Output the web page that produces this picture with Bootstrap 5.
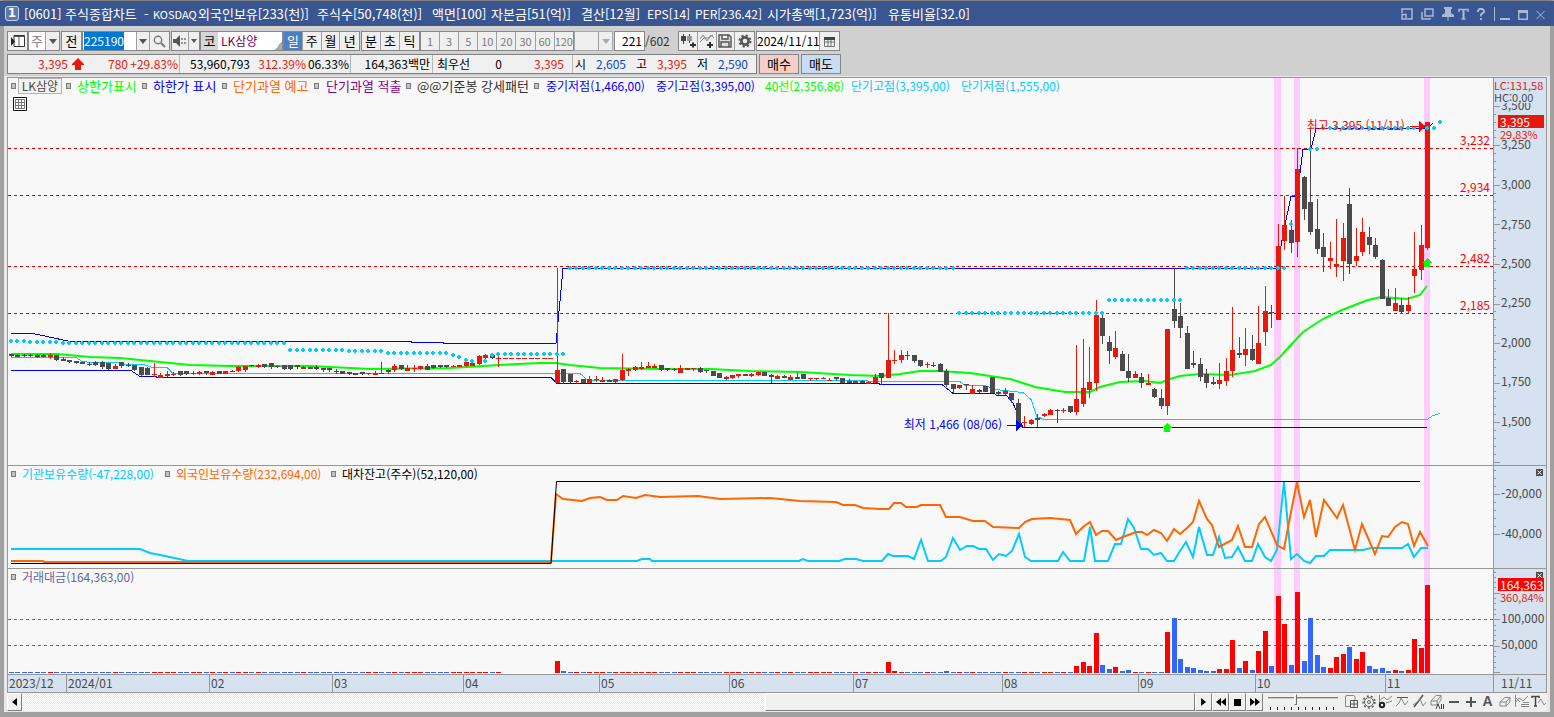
<!DOCTYPE html>
<html lang="ko">
<head>
<meta charset="utf-8">
<meta name="viewport" content="width=device-width, initial-scale=1">
<title>[0601] 주식종합차트</title>
<link href="https://cdn.jsdelivr.net/npm/bootstrap@5.3.0/dist/css/bootstrap.min.css" rel="stylesheet">
<style>
:root{--line:#969696;--axis:#d6e2f0;--plot:#f8f8f8;--up:#e8190a;--down:#4b4b4b;--cy:#00ccff}
body{font-family:"Noto Sans CJK KR",sans-serif;font-size:13px;line-height:16px;color:#000;background:#a0a0a0;overflow:hidden}
button,input,select{font:inherit;color:inherit}
.window{border:solid #a0a0a0;border-width:0 4px 5px;border-top:1px solid #808080;background:#e8e8e8;min-width:1200px}
.titlebar{background:#3a5691;color:#fff;height:25px;margin:0 -4px;padding:0 9px 0 5px}
.titlebar .idx{width:14px;height:15px;border:1px solid #c9d3e8;border-radius:3px;background:#5f78ab;font:bold 12px/13px "DejaVu Sans",sans-serif;text-align:center}
.caption{display:grid;align-items:center;grid-template-columns:41px 79px 9px 45px 119px 115px 59px 90px 66px 48px 72px 121px auto;margin-left:5px;white-space:nowrap}
.lat{font-size:11px}
.num{font-size:12px}
.winbtns svg{display:block;fill:none;stroke:#a9b8d8;stroke-width:1.5}
.winbtns button,.bare{background:none;border:0;padding:0}
.tools{background:#d0d0d0;height:51px;padding:5px 3px 0;border-bottom:1px solid #e8e8e8}
.tools>div{height:20px}
.tools>div+div{margin-top:3px}
.box{border:1px solid #868686;background:#efefef;height:20px;white-space:nowrap}
.box>*{border:0;border-right:1px solid #a0a0a0;background:none;padding:0;height:18px;line-height:18px;text-align:center}
.box>*:last-child{border-right:0}
.box svg,.tray svg{display:block;margin:auto}
.w19{width:19px}.w13{width:13px}.gap-l{margin-left:1px}
.btn-on{background:#4a80c4!important;color:#fff}
.dim{color:#7c7c7c}
.box>input{background:#fff;border-radius:0;outline:0}
.box>input::selection{background:#0078d7;color:#fff}
.pick{background:#fff!important;color:#777;width:17px}
#code{width:54px;padding-left:1px}
.sp{width:17px}.w9{width:10px}
.stock{width:83px;background:#fff linear-gradient(135deg,transparent 50%,#aaa 50%) right bottom/8px 8px no-repeat}
.stock .kq{background:#d6d6d6;width:17px;border:0}
.stock .nm{color:#705;padding-left:3px}
.b4>*,.b4i>*{width:19px}.b4,.b4i{width:77px}
.b3{width:59px}.b3>*{width:19px}
.b8{width:154px;font-size:11px}.b8>*{width:19px;flex:1 0 0}
.emp{width:39px;border-color:#a8a8a8}.emp>span{width:24px}
.cnt{width:31px}.cnt>input{width:29px;padding-right:2px}
.tot{width:33px;line-height:20px;color:#333}
.dt{width:84px}.dt>input{width:64px}
.red{color:#e0220f}.blu{color:#1048c0}
.quote{border:1px solid #808080;background:#f0f0f0;height:20px;width:750px}
.quote>div{display:grid;align-items:center;border-right:1px solid #b8b8b8;height:18px;white-space:nowrap;text-align:right}
.quote>div:last-child{border:0}
.q1{grid-template-columns:60px 16px 44px 50px;width:172px}
.q2{grid-template-columns:70px 56px 43px;width:171px}
.q3{width:82px;padding-right:2px}
.q4{grid-template-columns:37px 32px 62px;width:140px}
.q5{grid-template-columns:12px 40px 21px 40px 21px 40px;width:183px;padding-left:1px}
.order{border:1px solid #868686;width:40px;height:20px;padding:0;line-height:18px}
.buy{background:#f4cfca;margin:0 2px}.sell{background:#c8ddf4}
.chart{border:1px solid var(--line);margin:0 3px;background:var(--plot)}
.pane{min-height:0;border-bottom:1px solid var(--line)}
.p-price{flex:387 1 0}.p-hold{flex:102 1 0}.p-vol{flex:105 1 0}
.plot{min-width:0}
.plot>svg,.scale>svg{display:block;width:100%;height:100%}
.scale{width:53px;background:var(--axis);border-left:1px solid var(--line);color:#4b4b4b;font-size:12px}
.scale .tick{position:absolute;left:7px;transform:translateY(-50%)}
.legend i{width:5px;height:6px;border:1px solid #7c7c7c;background:#c4c4c4;align-self:center;justify-self:start}
.legend{position:absolute;top:0;left:3px;white-space:nowrap;display:grid;align-items:center}
.lg-price{grid-template-columns:7px 48px 11px 65px 11px 69px 11px 81px 12px 80px 11px 117px 12px 110px 109px 86px 110px auto}
.lg-hold{grid-template-columns:11px 143px 11px 155px 11px auto;font-size:12px}
.lg-vol{grid-template-columns:11px auto;font-size:12px}
.boxed{border:1px solid #b4b4b4;background:#f2f2f2;text-align:center;line-height:14px;width:44px;color:#4b4b4b;font-size:12px}
.tbl{position:absolute;top:19px;left:5px;width:14px;height:14px}
.lvl{position:absolute;right:3px;color:#f00;font-size:12px;transform:translateY(-100%)}
.mark-tx{position:absolute;white-space:nowrap;font-size:12px;transform:translate(-100%,-50%)}
.tag{position:absolute;left:4px;right:2px;background:var(--up);color:#fff;height:13px;line-height:13px;padding-left:2px}
.tag-sub{position:absolute;left:6px;color:var(--up);line-height:12px;font-size:11px}
.lchc{position:absolute;top:0;left:0;right:0;line-height:12px;font-size:11px;white-space:nowrap;background:var(--axis);height:25px;padding-top:1px}
.cls{position:absolute;right:3px;top:3px;width:7px;height:7px;background:#4b4b4b;color:#fff;border:0;padding:0;display:flex}
.cls svg{margin:auto}
.dates{height:17px;background:var(--axis);color:#4b4b4b;font-size:12px;line-height:16px}
.months{display:grid;grid-template-columns:58fr 143fr 123fr 131fr 136fr 130fr 124fr 149fr 136fr 117fr 130fr 108fr;min-width:0}
.months>span{border-left:1px solid var(--line);padding-left:1px;white-space:nowrap}
.months>span:first-child{border:0}
.today{width:53px;border-left:1px solid var(--line);padding-left:7px}
.tray{height:18px;margin:0 3px 1px;background:#f0f0f0}
.track{background:repeating-conic-gradient(#fff 0 25%,#e9e9e9 0 50%) 0 0/2px 2px}
.raised{border:1px solid;border-color:#fff #808080 #808080 #fff;background:#f0f0f0;padding:0;width:17px;height:18px}
.w15{width:15px}
.thumb{width:430px}
.zoomer{width:70px;background:repeating-linear-gradient(90deg,#222 0 1px,transparent 1px 7px) 2px 14px/66px 3px no-repeat;margin:0 5px}
.zoomer input{appearance:none;display:block;width:70px;height:12px;margin:0;background:linear-gradient(#808080 1px,#c8c8c8 1px) 0 4px/70px 2px no-repeat}
.zoomer input::-webkit-slider-thumb{appearance:none;width:3px;height:11px;background:#e8e8e8;border:1px solid;border-color:#fff #707070 #707070 #fff}
.tray .ic{width:17px;height:17px}
.tray .ltr{color:#555;font:bold 14px/17px "Liberation Sans",sans-serif}
</style>
</head>
<body>
<main class="window vh-100 d-flex flex-column">
<header class="titlebar d-flex align-items-center flex-shrink-0">
  <span class="idx flex-shrink-0">1</span>
  <div class="caption flex-grow-1"><span>[0601]</span><span>주식종합차트</span><span>-</span><span class="lat">KOSDAQ</span><span>외국인보유[233(천)]</span><span>주식수[50,748(천)]</span><span>액면[100]</span><span>자본금[51(억)]</span><span>결산[12월]</span><span class="num">EPS[14]</span><span class="num">PER[236.42]</span><span>시가총액[1,723(억)]</span><span>유통비율[32.0]</span></div>
  <div class="winbtns d-flex align-items-center">
    <button aria-label="작은 창" class="me-2"><svg width="12" height="12" viewBox="0 0 12 12"><path d="M1 5V1H11V11H6M1 6.5H5V11H1Z"/></svg></button>
    <button aria-label="복제" class="me-2"><svg width="13" height="12" viewBox="0 0 13 12"><path d="M4 1H12V8H4ZM1 4V11H9V10"/></svg></button>
    <button aria-label="고정" class="me-1"><svg width="12" height="14" viewBox="0 0 12 14"><path fill="#a9b8d8" stroke="none" d="M2 0H10V2H9V6L12 8V10H6.5V14H5.500V10H0V8L3 6V2H2Z"/></svg></button>
    <button aria-label="글꼴" class="me-2"><svg width="11" height="12" viewBox="0 0 11 12"><path d="M1 4V1.500H10V4M3.500 11H7.500"/><path stroke-width="2.200" d="M5.500 1V11"/></svg></button>
    <button aria-label="도움말" class="me-2"><svg width="8" height="12" viewBox="0 0 8 12"><path stroke-width="1.800" d="M1 4V2.500L2.500 1H5.500L7 2.500V4L4 6.500V8.500M4 10V12"/></svg></button>
    <svg width="3" height="14"><path stroke-width="1" d="M1.500 0V14"/></svg>
    <button aria-label="최소화" class="ms-1 me-2"><svg width="10" height="12" viewBox="0 0 10 12"><path stroke-width="2" d="M0 11H10"/></svg></button>
    <button aria-label="최대화" class="me-2"><svg width="10" height="12" viewBox="0 0 10 12"><path d="M.7 2V11.300H9.300V2"/><path stroke-width="3" d="M0 3.500H10"/></svg></button>
    <button aria-label="닫기"><svg width="9" height="12" viewBox="0 0 9 12"><path stroke-width="1" d="M.5 3L8.500 11M8.500 3L.5 11"/></svg></button>
  </div>
</header>

<section class="tools flex-shrink-0">
  <div class="d-flex">
    <div class="box d-flex"><button class="w19" aria-label="패널"><svg width="18" height="16" viewBox="0 0 18 16"><path d="M5 2.500H15.500V13.500H5Z" fill="#fff" stroke="#333"/><path d="M5 3.500H16M10 3V13" stroke="#555" fill="none"/><path d="M2 4L6 8.500L2 13Z" fill="#222"/></svg></button></div>
    <div class="box d-flex"><span class="pick">주</span><button class="w13" aria-label="종류 열기"><svg width="8" height="5"><path d="M0 0H8L4 5Z" fill="#555"/></svg></button></div>
    <div class="box d-flex gap-l"><button class="w19">전</button></div>
    <div class="box d-flex"><input class="num text-start" id="code" aria-label="종목코드" value="225190" size="1"><button class="w13" aria-label="최근 종목"><svg width="8" height="5"><path d="M0 0H8L4 5Z" fill="#555"/></svg></button><button class="w19" aria-label="검색"><svg width="13" height="13" viewBox="0 0 13 13" fill="none" stroke="#777"><circle cx="5" cy="5" r="3.700" stroke-width="1.400"/><path d="M8 8L12 12" stroke-width="2"/></svg></button></div>
    <div class="box d-flex gap-l"><button class="sp" aria-label="소리"><svg width="14" height="12" viewBox="0 0 14 12"><path d="M0 4H3L7 0V12L3 8H0Z" fill="#555"/><path d="M9 3v2M9 7v2M12 3v2M12 7v2" stroke="#777" stroke-width="1.500"/></svg></button><button class="w9" aria-label="소리 메뉴"><svg width="6" height="4"><path d="M0 0H6L3 4Z" fill="#555"/></svg></button></div>
    <div class="box d-flex stock"><span class="kq">코</span><span class="nm num">LK삼양</span></div>
    <div class="box d-flex b4"><button class="btn-on">일</button><button>주</button><button>월</button><button>년</button></div>
    <div class="box d-flex b3 gap-l"><button>분</button><button>초</button><button>틱</button></div>
    <div class="box d-flex b8 dim"><button>1</button><button>3</button><button>5</button><button>10</button><button>20</button><button>30</button><button>60</button><button>120</button></div>
    <div class="box d-flex emp"><span></span><button class="w13" aria-label="분봉 목록"><svg width="8" height="5"><path d="M0 0H8L4 5Z" fill="#aaa"/></svg></button></div>
    <div class="box d-flex cnt gap-l"><input class="num text-end" aria-label="봉 개수" value="221" size="1"></div>
    <span class="tot num">/602</span>
    <div class="box d-flex b4i">
      <button aria-label="차트 추가"><svg width="16" height="16" viewBox="0 0 16 16"><path d="M3.500 1V11M9.500 1V10" stroke="#444"/><path d="M1 3h5v5H1z" fill="#444"/><path d="M7 3h5v5H7z" fill="#999"/><path d="M10 12h6M13 9.500v5" stroke="#333" stroke-width="2"/></svg></button>
      <button aria-label="지표 추가"><svg width="16" height="16" viewBox="0 0 16 16"><path d="M1 6L4 2L8 8L12 2L15 5M1 9L5 5L9 5L14 2" stroke="#888" fill="none"/><path d="M8 12h6M11 9v6" stroke="#333" stroke-width="2"/></svg></button>
      <button aria-label="저장"><svg width="14" height="14" viewBox="0 0 14 14"><path d="M1 1H11L13 3V13H1ZM4 1V5H10V1M3 13V8H11V13" stroke="#555" stroke-width="1.400" fill="#ddd"/></svg></button>
      <button aria-label="설정"><svg width="14" height="14" viewBox="0 0 14 14"><circle cx="7" cy="7" r="3.600" stroke="#555" stroke-width="2.600" fill="none"/><circle cx="7" cy="7" r="5.500" stroke="#555" stroke-width="2" stroke-dasharray="2.200 2.120" fill="none"/></svg></button>
    </div>
    <div class="box d-flex dt gap-l"><input class="num text-center" aria-label="날짜" value="2024/11/11" size="1"><button class="w19" aria-label="달력"><svg width="11" height="11" viewBox="0 0 11 11"><path d="M.5 1.500h10v9h-10zM.5 6h10M4 4v6M7 4v6" stroke="#777" fill="none"/><path d="M0 1h11v3H0z" fill="#444"/></svg></button></div>
  </div>
  <div class="d-flex">
    <div class="quote d-flex num">
      <div class="q1 red"><span>3,395</span><svg class="ms-1" width="12" height="12" viewBox="0 0 12 12"><path d="M6 0L12 6V7H9V12H3V7H0V6Z" fill="#e8190a"/></svg><span>780</span><span>+29.83%</span></div>
      <div class="q2"><span>53,960,793</span><span class="red">312.39%</span><span>06.33%</span></div>
      <div class="q3">164,363백만</div>
      <div class="q4"><span>최우선</span><span>0</span><span class="red">3,395</span></div>
      <div class="q5"><span>시</span><span class="blu">2,605</span><span>고</span><span class="red">3,395</span><span>저</span><span class="blu">2,590</span></div>
    </div>
    <button class="order buy">매수</button><button class="order sell">매도</button>
  </div>
</section>

<section class="chart d-flex flex-column flex-grow-1">
  <div class="pane p-price d-flex">
    <div class="plot flex-grow-1 position-relative" id="price">
      <svg viewBox="8 78 1485 387" preserveAspectRatio="none" shape-rendering="crispEdges" role="img" aria-label="일봉 차트"></svg>
      <div class="legend lg-price"><i></i><span class="boxed">LK삼양</span><i></i><span style="color:#0f0">상한가표시</span><i></i><span style="color:#00f">하한가 표시</span><i></i><span style="color:#f60">단기과열 예고</span><i></i><span style="color:#808">단기과열 적출</span><i></i><span style="color:#333">@@기준봉 강세패턴</span><i></i><span class="num" style="color:#00f">중기저점(1,466,00)</span><span class="num" style="color:#00f">중기고점(3,395,00)</span><span class="num" style="color:#0f0">40선(2,356,86)</span><span class="num" style="color:#0cf">단기고점(3,395,00)</span><span class="num" style="color:#0cf">단기저점(1,555,00)</span></div>
      <button class="tbl bare" aria-label="표 보기"><svg class="d-block" width="14" height="14" viewBox="0 0 14 14"><path d="M.5 .5h13v13h-13z" fill="#fff" stroke="#111"/><path d="M2.500 2.500h9v9h-9zM2.500 5.500h9M2.500 8.500h9M5.500 2.500v9M8.500 2.500v9" fill="none" stroke="#777"/></svg></button>
    </div>
    <div class="scale position-relative" id="priceScale"><svg viewBox="1494 78 52 387" preserveAspectRatio="none" shape-rendering="crispEdges"></svg></div>
  </div>
  <div class="pane p-hold d-flex">
    <div class="plot flex-grow-1 position-relative" id="hold">
      <svg viewBox="8 466 1485 102" preserveAspectRatio="none" role="img" aria-label="보유수량"></svg>
      <div class="legend lg-hold"><i></i><span style="color:#0cf">기관보유수량(-47,228,00)</span><i></i><span style="color:#f60">외국인보유수량(232,694,00)</span><i></i><span>대차잔고(주수)(52,120,00)</span></div>
    </div>
    <div class="scale position-relative" id="holdScale"><svg viewBox="1494 466 52 102" preserveAspectRatio="none" shape-rendering="crispEdges"></svg><button class="cls" aria-label="닫기"><svg width="5" height="5"><path d="M.5 .5L4.500 4.500M4.500 .5L.5 4.500" stroke="#fff"/></svg></button></div>
  </div>
  <div class="pane p-vol d-flex">
    <div class="plot flex-grow-1 position-relative" id="vol">
      <svg viewBox="8 569 1485 105" preserveAspectRatio="none" shape-rendering="crispEdges" role="img" aria-label="거래대금"></svg>
      <div class="legend lg-vol"><i></i><span style="color:#669">거래대금(164,363,00)</span></div>
    </div>
    <div class="scale position-relative" id="volScale"><svg viewBox="1494 569 52 105" preserveAspectRatio="none" shape-rendering="crispEdges"></svg><button class="cls" aria-label="닫기"><svg width="5" height="5"><path d="M.5 .5L4.500 4.500M4.500 .5L.5 4.500" stroke="#fff"/></svg></button></div>
  </div>
  <div class="dates d-flex flex-shrink-0">
    <div class="months flex-grow-1"><span>2023/12</span><span>2024/01</span><span>02</span><span>03</span><span>04</span><span>05</span><span>06</span><span>07</span><span>08</span><span>09</span><span>10</span><span>11</span></div>
    <div class="today">11/11</div>
  </div>
</section>

<footer class="tray d-flex flex-shrink-0">
  <button class="raised w15" aria-label="왼쪽으로"><svg width="5" height="8"><path d="M5 0V8L0 4Z"/></svg></button>
  <div class="track flex-grow-1 d-flex justify-content-end"><div class="raised thumb"></div></div>
  <button class="raised" aria-label="오른쪽으로"><svg width="5" height="8"><path d="M0 0V8L5 4Z"/></svg></button>
  <button class="raised" aria-label="뒤로"><svg width="10" height="8"><path d="M5 0V8L0 4ZM10 0V8L5 4Z"/></svg></button>
  <button class="raised" aria-label="정지"><svg width="7" height="7"><path d="M0 0H7V7H0Z"/></svg></button>
  <button class="raised" aria-label="앞으로"><svg width="10" height="8"><path d="M0 0V8L5 4ZM5 0V8L10 4Z"/></svg></button>
  <div class="zoomer"><input type="range" aria-label="확대" min="0" max="100" value="39"></div>
  <div class="icons d-flex">
    <button class="bare ic" aria-label="창 추가"><svg width="15" height="15" viewBox="0 0 15 15" fill="none" stroke="#888"><path d="M11 6V3Q11 1.500 9.500 1.500H3Q1.500 1.500 1.500 3V12.500H7"/><path d="M6.500 6.500h7v7h-7zM10 6.500v7M6.500 10h7" stroke="#555"/></svg></button>
    <button class="bare ic" aria-label="설정"><svg width="14" height="14" viewBox="0 0 14 14" fill="none" stroke="#666"><circle cx="7" cy="7" r="4.500"/><circle cx="7" cy="7" r="5.900" stroke-width="1.700" stroke-dasharray="2 2.120"/><circle cx="7" cy="7" r="1.500"/></svg></button>
    <button class="bare ic" aria-label="지표 설정"><svg width="15" height="15" viewBox="0 0 15 15" fill="none" stroke="#888"><path d="M1.500 1v8M2 6L6 3L9 6L14 2M8 9L14 7"/><circle cx="4" cy="11" r="2.200" stroke="#222" stroke-width="2"/></svg></button>
    <button class="bare ic" aria-label="고저선"><svg width="15" height="15" viewBox="0 0 15 15" fill="none" stroke="#888"><path d="M2 3.500H13" stroke="#555"/><path d="M1 12L4 9L6 4L10 11L13 7"/></svg></button>
    <button class="bare ic" aria-label="추세선"><svg width="15" height="15" viewBox="0 0 15 15" fill="none" stroke="#888"><path d="M2 13L11 1" stroke="#555" stroke-width="1.500"/><path d="M1 11L5 8L8 5L11 12L14 8"/></svg></button>
    <button class="bare ic" aria-label="모두 지우기"><svg width="16" height="16" viewBox="0 0 16 16" fill="none" stroke="#888"><path d="M2 7L7 1.500H12L8 7ZM2 7V11H8V7M8 11L12 6V1.500"/><path d="M7 15l2-5l2 5M12.500 10v5M14.500 10v5" stroke="#444"/></svg></button>
    <button class="bare ic" aria-label="축소"><svg width="14" height="14"><path d="M2 7H12" stroke="#555" stroke-width="2"/></svg></button>
    <button class="bare ic" aria-label="확대"><svg width="14" height="14"><path d="M2 7H12M7 2V12" stroke="#555" stroke-width="2"/></svg></button>
    <button class="bare ic ltr">A</button>
    <button class="bare ic" aria-label="지우기"><svg width="14" height="14" viewBox="0 0 14 14" fill="none" stroke="#888"><path d="M2 7L7 2.500H12L8 7ZM2 7V11H8V7M8 11L12 7V2.500"/></svg></button>
    <button class="bare ic" aria-label="지표 목록"><svg width="16" height="15" viewBox="0 0 16 15" fill="none" stroke="#888"><path d="M1.500 1v12M2 8L5 4L9 7L14 2M2 4L6 8M7 10.500h8M7 12.500h8M9 8.500h6"/></svg></button>
    <button class="bare ic" aria-label="문자"><svg width="15" height="15" viewBox="0 0 15 15" fill="none" stroke="#888"><path d="M1 4V2.500H8V4M4.500 2V12M3 12h3" stroke="#444" stroke-width="1.500"/><path d="M7 9L10 5L13 11L15 9"/></svg></button>
  </div>
</footer>
</main>

<script src="https://cdn.jsdelivr.net/npm/bootstrap@5.3.0/dist/js/bootstrap.bundle.min.js"></script>
<script>
const X = i => Math.round(11 + 6.4955 * i);
/* candles: direction, high, body top, body bottom, low (drawing units) */
const raw = `g354,354,356,357 g354,355,357,357 g354,355,356,357 g354,355,356,357 g354,355,357,358 g354,355,357,357 r353,355,357,359 g355,355,360,361 g357,359,361,361 g360,360,362,363
g361,361,363,364 g362,362,364,364 g362,364,365,366 g361,362,365,366 g361,362,367,369 g363,363,369,370 r364,366,369,369 g362,362,366,368 g363,365,366,367 g365,365,370,371
g367,367,375,376 g367,368,375,375 r363,374,375,377 r373,375,378,378 r371,374,376,377 r372,374,375,376 g371,371,375,376 g371,371,374,375 r371,373,374,375 r371,372,374,375
g371,371,373,375 r371,372,375,375 g371,371,374,374 r371,371,374,374 g370,371,372,372 r366,367,371,372 r366,366,370,372 g365,365,366,367 r364,365,367,368 g364,364,367,368
g363,363,367,369 g365,366,367,368 g365,365,369,370 g365,365,369,370 g365,365,367,369 r366,367,369,369 g367,367,369,369 g365,367,369,370 g368,368,370,372 g368,368,370,372
g369,371,372,374 g371,371,374,374 g372,372,374,375 g373,373,375,375 g372,372,374,375 r373,373,374,375 r371,373,375,375 g362,373,374,374 g369,370,372,374 r364,366,370,372
g365,365,369,370 r365,368,371,371 r365,368,369,372 r366,366,369,370 g364,366,370,370 g365,365,368,369 g365,365,367,368 g365,365,367,368 r365,366,367,367 r365,365,367,367
r361,362,366,367 r362,363,366,366 r355,356,364,365 r354,355,358,359 g355,355,358,359 r355,358,359,367 r358,358,359,359 r358,358,359,359 r358,358,359,359 r358,358,359,359
r358,358,359,359 r358,358,359,359 r358,358,359,359 r358,358,359,359 r268,370,383,383 g369,369,382,383 g374,374,382,383 r380,381,382,384 g379,379,383,383 r376,379,383,383
r376,379,380,382 r377,380,382,382 g379,380,382,382 r379,379,382,383 r354,370,380,381 r368,369,371,376 r366,367,370,371 r362,367,369,370 r362,366,368,368 r364,366,368,368
g365,365,370,371 g368,368,370,371 g368,369,370,371 r365,368,373,373 r368,368,370,370 r368,368,369,371 g367,368,372,373 g370,370,371,373 g371,371,376,376 g373,373,378,378
r376,377,379,380 r375,375,378,379 r374,374,376,378 g374,374,376,376 r373,374,376,377 r372,372,375,376 g372,372,376,376 g374,375,377,383 r375,376,379,379 g375,376,378,378
r375,377,380,380 g373,377,379,379 g374,374,379,379 r378,378,379,381 r378,378,379,380 r377,378,379,379 r378,380,381,381 g377,377,379,381 g378,378,383,383 g379,381,383,383
r381,381,383,383 g380,381,383,383 r381,382,384,384 r374,377,383,383 g373,373,378,385 r313,360,378,378 r350,360,361,364 r350,355,360,363 g351,355,356,360 g355,355,361,363
g360,360,366,367 r362,364,365,368 g362,365,366,367 g363,364,372,372 g369,371,385,387 g384,384,389,393 r385,385,388,389 g384,384,385,390 r385,389,394,394 g389,390,392,393
g386,386,392,392 g377,377,393,393 g391,392,394,395 r388,391,394,395 g393,393,400,403 g399,403,425,428 r416,422,423,427 r419,420,424,425 g414,418,420,427 r413,414,416,417
r409,410,415,415 g409,410,411,423 r408,410,411,413 g406,406,412,413 r345,399,412,415 r339,388,404,407 r347,382,390,398 r300,315,383,391 g313,318,336,344 g336,342,351,364
r331,348,357,359 g351,354,371,371 g354,371,378,382 r371,374,378,378 g373,377,383,388 r374,383,385,385 g388,389,397,398 g389,398,406,409 r329,329,406,415 g268,309,321,328
g303,316,328,338 g326,333,369,369 g351,363,365,368 g358,364,377,381 g369,374,383,388 g377,382,384,385 r363,380,384,389 r358,371,381,386 r307,350,371,377 g337,353,355,358
r328,349,355,366 g335,349,360,361 r306,343,364,364 r286,311,332,346 g305,312,313,328 r224,246,320,320 r196,225,241,250 g220,230,243,253 r148,169,242,257 g176,177,209,220
g128,202,232,235 g199,229,249,254 g233,247,257,272 r242,258,261,269 r219,264,267,277 r223,238,261,281 g188,204,264,274 r228,256,261,266 r218,232,252,256 g227,237,245,254
g238,245,257,259 g259,260,299,299 g289,298,306,306 r288,303,311,311 g298,305,312,314 r297,305,311,314 r232,269,276,293 r225,245,270,280 r122,122,248,250`.split(/\s+/)
  .map(s => [s[0], ...s.slice(1).split(',').map(Number)]);

const rect = (x, y, w, h, c) => `<rect x="${x}" y="${y}" width="${w}" height="${h}" fill="${c}"/>`;
const line = (pts, c, w = 1, extra = '') => `<polyline points="${pts}" fill="none" stroke="${c}" stroke-width="${w}" ${extra}/>`;
const dash = (y, c) => `<path d="M8 ${y}.5H1493" stroke="${c}" stroke-dasharray="3 3"/>`;
const bands = (y, h) => [[1274, 7], [1294, 6], [1424, 6]].map(b => rect(b[0], y, b[1], h, '#ffccff')).join('');
const C = { r: '#e8190a', g: '#4b4b4b' };

/* price pane */
let s = bands(78, 387) + [148, 195, 266, 313].map(y => dash(y, '#e80000')).join('');
s += line('11,357.5 76,357.5 82,361.5 92,362.5 118,362.5 125,364.5 143,364.5 153,367.5 167,367.5 173,373.5 580,373.5 588,380.5 865,380.5 870,381.5 960,381.5 965,385.5 985,385.5 995,389.5 1013,391.5 1023,392.5 1031,399.5 1037,416.5 1044,419.5 1427,419.5 1433,415.5 1440,413.5', '#00ccff');
s += line('11,333.5 33,333.5 70,341.5 411,341.5 411,342.5 443,342.5 443,343.5 556,343.5 563,268.5 1277,268.5 1282,240 1285,225 1291,196.5 1297,196.5 1303,149.5 1311,149.5 1316,128.5 1427,128.5 1433,123', '#0000f0');
s += line('11,370.5 131,370.5 140,376.500 156,376.5 157,377.5 551,377.5 557,383.5 879,383.5 880,384.5 942,384.5 953,393.5 994,393.5 997,395.5 1007,396 1013,403 1023,427.5 1427,427.5', '#0000f0');
s += line('11,354 57,354 90,357 120,358 150,361 190,365 230,366 310,366 370,369 450,368 500,365 540,363 556,363 570,365 600,368 660,369 710,369 750,371 800,372 850,375 880,376 900,374 920,371 940,371 970,373 1010,379 1035,387 1065,392 1090,392 1100,387 1120,382 1145,381 1160,383 1170,379 1180,376 1200,374 1230,375 1255,371 1271,365 1280,357 1290,346 1303,332 1323,319 1342,310 1368,300 1381,297 1395,298 1407,299 1420,295 1427,286', '#00ff00', 2, 'shape-rendering="auto"');
s += raw.map((k, i) => rect(X(i), k[1], 1, k[4] - k[1] || 1, C[k[0]]) + rect(X(i) - 2, k[2], 5, Math.max(k[3] - k[2], 1), C[k[0]])).join('');
[[0, 2, 341], [3, 7, 342], [8, 42, 343], [43, 51, 350], [52, 57, 351], [58, 67, 353], [68, 68, 355], [69, 69, 357], [70, 70, 360], [71, 71, 361], [73, 73, 361], [74, 74, 355], [75, 85, 354],
 [86, 145, 268], [146, 168, 313], [169, 180, 300], [181, 196, 268], [197, 197, 224], [200, 201, 149], [202, 219, 128], [220, 220, 122]].forEach(([a, b, y]) => {
  for (let i = a; i <= b; i++) s += rect(X(i) - 2, y - 1, 4, 2, '#00ccff') + rect(X(i) - 1, y - 2, 2, 4, '#00ccff');
});
s += '<path d="M1427 258l5 5h-2v4h-6v-4h-2zM1167 423l5 5h-2v4h-6v-4h-2z" fill="#00ff00"/>';
s += '<path d="M1410 126.500H1420" stroke="#f00"/><path d="M1419 121l7 5.500l-7 5.500z" fill="#f00"/><path d="M1007 425.500H1017" stroke="#00f"/><path d="M1016 420l7 5.500l-7 5.500z" fill="#00f"/>';
document.querySelector('#price svg').innerHTML = s;

const pct = (v, o, n) => ((v - o) / n * 100).toFixed(2) + '%';
const put = (id, h) => document.getElementById(id).insertAdjacentHTML('beforeend', h);
[['3,232', 148], ['2,934', 195], ['2,482', 266], ['2,185', 313]].forEach(l => put('price', `<span class="lvl" style="top:${pct(l[1], 78, 387)}">${l[0]}</span>`));
put('price', `<span class="mark-tx" style="color:#f00;left:${pct(1405, 8, 1485)};top:${pct(125, 78, 387)}">최고 3,395 (11/11)</span>`);
put('price', `<span class="mark-tx" style="color:#00f;left:${pct(1002, 8, 1485)};top:${pct(424, 78, 387)}">최저 1,466 (08/06)</span>`);

/* scales */
const ticks = (id, list) => document.querySelector(`#${id} svg`).innerHTML = list.map(([y, w]) => rect(1494, Math.round(y), w, 1, '#969696')).join('');
const label = (id, t, y, o, n) => put(id, `<span class="tick" style="top:${pct(y, o, n)}">${t}</span>`);
let t = [];
for (let k = 0; k <= 45; k++) t.push([105.8 + 7.91 * k, k % 5 ? 2 : 6]);
ticks('priceScale', t);
['3,500', '3,250', '3,000', '2,750', '2,500', '2,250', '2,000', '1,750', '1,500'].forEach((v, k) => label('priceScale', v, 105 + 39.5 * k, 78, 387));
put('priceScale', `<div class="lchc"><div class="red">LC:131,58</div><div>HC:0,00</div></div><span class="tag-sub" style="top:${pct(128, 78, 387)}">29,83%</span><span class="tag" style="top:${pct(115, 78, 387)}">3,395</span>`);
t = [];
for (let k = 0; k <= 8; k++) t.push([470 + 8 * k, k % 5 == 3 ? 6 : 2]);
ticks('holdScale', t);
label('holdScale', '-20,000', 493, 466, 102); label('holdScale', '-40,000', 533, 466, 102);
t = [];
for (let k = 0; k <= 19; k++) t.push([571.5 + 5.3 * k, k % 5 == 4 ? 6 : 2]);
ticks('volScale', t);
label('volScale', '100,000', 618, 569, 105); label('volScale', '50,000', 644, 569, 105);
put('volScale', `<span class="tag-sub" style="top:${pct(591, 569, 105)}">360,84%</span><span class="tag" style="top:${pct(578, 569, 105)};background:#f00">164,363</span>`);

/* holdings pane */
s = bands(466, 102);
s += line('11,549 140,549 150,553 165,556 188,561 637,561 642,559 650,559 652,561 799,561 803,559 808,561 839,561 845,559 856,559 863,561 882,561 888,554 893,556 908,556 914,559 921,540 928,561 941,561 946,557 953,538 960,550 967,546 973,546 979,549 986,549 993,560 999,554 1006,556 1012,551 1019,534 1025,557 1031,561 1058,561 1063,552 1070,561 1084,561 1090,527 1095,561 1108,561 1115,544 1121,544 1128,519 1134,528 1141,549 1148,549 1154,555 1161,553 1167,561 1174,561 1180,551 1186,542 1193,557 1199,527 1207,555 1213,555 1219,537 1225,558 1232,557 1238,547 1245,561 1252,561 1258,544 1265,557 1271,561 1277,550 1284,482 1291,559 1297,554 1304,561 1310,563 1316,556 1324,556 1330,550 1363,550 1371,548 1402,548 1408,544 1414,557 1421,548 1428,548', '#00ccff', 2);
s += line('11,561 43,561 44,562 551,562 556,494 563,499 582,501 590,498 600,497 607,500 617,500 623,496 636,498 645,495 660,497 698,496 720,499 770,498 800,501 836,502 843,505 855,505 863,508 880,509 889,509 894,503 901,503 906,507 917,507 921,505 940,505 946,517 960,517 973,521 985,521 993,527 1019,528 1025,522 1032,519 1050,518 1070,520 1076,534 1083,527 1090,522 1096,535 1102,531 1108,531 1116,540 1123,537 1136,532 1142,532 1147,535 1154,530 1161,533 1167,541 1174,529 1180,534 1187,528 1193,522 1199,501 1207,519 1212,525 1219,547 1232,540 1238,526 1245,547 1252,547 1259,524 1265,517 1277,545 1284,549 1291,512 1297,482 1304,517 1310,500 1316,537 1324,500 1337,518 1343,505 1355,550 1362,524 1375,554 1382,536 1388,537 1395,527 1402,522 1408,524 1414,546 1420,532 1428,546', '#ff6600', 2);
s += line('11,563.500 551,563.500 556.500,481.500 1420,481.500', '#000');
document.querySelector('#hold svg').innerHTML = s;

/* traded value pane */
const late = [7, 11, 7, 40, 8, 4, 6, 2, 3, 1, 1, 1, 1, 1, 41, 55, 14, 6, 5, 3, 2, 2, 4, 4, 33, 5, 12, 3, 22, 42, 7, 77, 49, 8, 81, 12, 55, 18, 6, 5, 16, 19, 26, 14, 21, 7, 4, 5, 2, 3, 2, 3, 34, 25, 88];
const early = { 84: 12, 85: 2, 135: 11, 136: 2, 144: 2 };
s = bands(569, 105) + dash(619, '#f0f') + dash(645, '#f0f');
raw.forEach((k, i) => {
  if (i > 75 && i < 84) return;
  const h = i >= 164 ? late[i - 164] : early[i] || 1;
  s += rect(X(i) - 2, 673 - h, 5, h, k[0] == 'r' ? '#ff0000' : '#3366ff');
});
document.querySelector('#vol svg').innerHTML = s;
const code = document.getElementById('code'); code.focus(); code.select();
</script>
</body>
</html>
